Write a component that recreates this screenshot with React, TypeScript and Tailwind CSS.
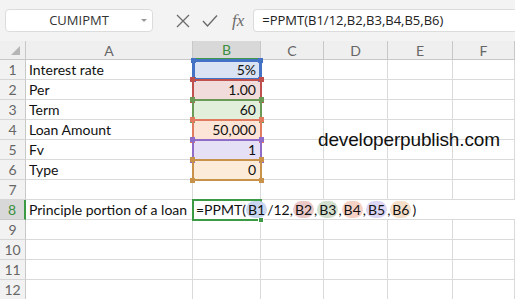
import React from "react";

const rows = [
  { n: 1, a: "Interest rate", b: "5%", fill: "bg-[#dae3f3]", border: "border-[#4472c4] border-[3px]", sq: "bg-[#4472c4]" },
  { n: 2, a: "Per", b: "1.00", fill: "bg-[#f2dcdb]", border: "border-[#c0504d] border-2", sq: "bg-[#c0504d]" },
  { n: 3, a: "Term", b: "60", fill: "bg-[#e2efda]", border: "border-[#6a9a55] border-2", sq: "bg-[#6a9a55]" },
  { n: 4, a: "Loan Amount", b: "50,000", fill: "bg-[#fce4d6]", border: "border-[#e07b5f] border-2", sq: "bg-[#e07b5f]" },
  { n: 5, a: "Fv", b: "1", fill: "bg-[#e6e0f7]", border: "border-[#8f6cc8] border-2", sq: "bg-[#8f6cc8]" },
  { n: 6, a: "Type", b: "0", fill: "bg-[#fcebd9]", border: "border-[#c9924a] border-2", sq: "bg-[#c9924a]" },
];

const cols = ["C", "D", "E", "F"];

function Cell({ className = "", children }: { className?: string; children?: React.ReactNode }) {
  return <div className={"h-[20px] border-r border-b border-[#dadada] " + className}>{children}</div>;
}

function RowHead({ n, active }: { n: number; active?: boolean }) {
  return (
    <div
      className={
        "h-[20px] flex items-center justify-center border-b text-[14px] font-['Lato'] " +
        (active
          ? "bg-[#d8d8d8] text-[#3b8f3e] border-r-2 border-r-[#3b9a43] border-b-[#c8c8c8]"
          : "bg-[#f2f2f2] text-[#666] border-r border-r-[#c8c8c8] border-b-[#d6d6d6]")
      }
    >
      {n}
    </div>
  );
}

function Corners({ sq }: { sq: string }) {
  return (
    <>
      <div className={"absolute -left-[4px] -top-[4px] w-[5px] h-[5px] " + sq} />
      <div className={"absolute -right-[4px] -top-[4px] w-[5px] h-[5px] " + sq} />
      <div className={"absolute -left-[4px] -bottom-[4px] w-[5px] h-[5px] " + sq} />
      <div className={"absolute -right-[4px] -bottom-[4px] w-[5px] h-[5px] " + sq} />
    </>
  );
}

function Chip({ bg, children }: { bg: string; children: React.ReactNode }) {
  return <span className={"relative z-20 inline-block rounded-full px-[2px] leading-[17px] " + bg}>{children}</span>;
}

export default function App() {
  return (
    <div className="w-[515px] h-[299px] overflow-hidden bg-white relative">
      {/* toolbar */}
      <div className="h-[41px] bg-[#f3f3f3] flex items-center pl-[5px] font-['Open_Sans']">
        <div className="w-[148px] h-[23px] bg-white rounded-[4px] border border-[#dcdcdc] relative flex items-center justify-center text-[13px] text-[#333]">
          CUMIPMT
          <svg className="absolute right-[5px] top-[9px]" width="6" height="4" viewBox="0 0 6 4">
            <path d="M0 0 L6 0 L3 3 Z" fill="#999" />
          </svg>
        </div>
        <div className="flex items-center ml-[23px] gap-[10px]">
          <svg width="14" height="14" viewBox="0 0 14 14">
            <path d="M1 1 L13 13 M13 1 L1 13" stroke="#6b6b6b" strokeWidth="1.3" fill="none" />
          </svg>
          <svg width="16" height="14" viewBox="0 0 16 14" className="ml-[2px]">
            <path d="M1 7 L5.5 12 L15 1.5" stroke="#6b6b6b" strokeWidth="1.4" fill="none" />
          </svg>
          <span className="ml-[4px] text-[17px] italic text-[#6b6b6b] font-['Liberation_Serif'] leading-none">fx</span>
        </div>
        <div className="ml-[9px] flex-1 h-[23px] bg-white rounded-l-[4px] border border-r-0 border-[#dcdcdc] flex items-center pl-[8px] text-[13px] text-[#222]">
          =PPMT(B1/12,B2,B3,B4,B5,B6)
        </div>
      </div>

      {/* grid */}
      <div className="grid grid-cols-[26px_167px_68px_63px_64px_65px_62px] font-['Lato'] text-[14px] text-[#111]">
        {/* header row */}
        <div className="h-[19px] bg-[#efefef] border-r border-b border-[#c8c8c8] relative">
          <svg className="absolute right-[5px] bottom-[4px]" width="9" height="9" viewBox="0 0 9 9">
            <path d="M9 0 L9 9 L0 9 Z" fill="#b5b5b5" />
          </svg>
        </div>
        <div className="h-[19px] bg-[#efefef] border-r border-b border-[#c8c8c8] flex items-center justify-center text-[14px] text-[#666]">A</div>
        <div className="h-[19px] bg-[#d8d8d8] border-r border-r-[#c8c8c8] border-b-2 border-b-[#3b9a43] flex items-center justify-center text-[14px] text-[#3b8f3e]">B</div>
        {cols.map((c) => (
          <div key={c} className="h-[19px] bg-[#efefef] border-r border-b border-[#c8c8c8] flex items-center justify-center text-[14px] text-[#666]">
            {c}
          </div>
        ))}

        {rows.map((r) => (
          <React.Fragment key={r.n}>
            <RowHead n={r.n} />
            <Cell className="flex items-center pl-[3px] whitespace-nowrap">{r.a}</Cell>
            <div className={"h-[20px] relative flex items-center justify-end pr-[5px] border-b border-[#dadada] " + r.fill}>
              {r.b}
              <div className={"absolute -left-[1px] -top-[1px] w-[70px] h-[22px] z-10 " + r.border}>
                <Corners sq={r.sq} />
              </div>
            </div>
            {cols.map((c) => (
              <Cell key={c} />
            ))}
          </React.Fragment>
        ))}

        {/* row 7 */}
        <RowHead n={7} />
        <Cell />
        <Cell />
        {cols.map((c) => (
          <Cell key={c} />
        ))}

        {/* row 8 */}
        <RowHead n={8} active />
        <Cell className="flex items-center pl-[3px] whitespace-nowrap">Principle portion of a loan</Cell>
        <div className="col-span-5 h-[20px] border-b border-[#dadada] relative flex items-center pl-[3px] whitespace-nowrap">
          <span>=PPMT(</span>
          <Chip bg="bg-[#c9d6f0]">B1</Chip>
          <span>/12,</span>
          <Chip bg="bg-[#ebc9c8]">B2</Chip>
          <span>,</span>
          <Chip bg="bg-[#d3dfce]">B3</Chip>
          <span>,</span>
          <Chip bg="bg-[#f6d2c6]">B4</Chip>
          <span>,</span>
          <Chip bg="bg-[#dcd6f4]">B5</Chip>
          <span>,</span>
          <Chip bg="bg-[#f5dfc8]">B6</Chip>
          <span className="ml-[1px]">)</span>
          <div className="absolute -left-[1px] -top-[1px] w-[70px] h-[22px] border-2 border-[#3b9a43] z-10">
            <div className="absolute -right-[4px] -bottom-[4px] w-[6px] h-[6px] bg-[#3b9a43] border border-white" />
          </div>
        </div>

        {[9, 10, 11, 12].map((n) => (
          <React.Fragment key={n}>
            <RowHead n={n} />
            <Cell />
            <Cell />
            {cols.map((c) => (
              <Cell key={c} />
            ))}
          </React.Fragment>
        ))}
      </div>

      {/* watermark */}
      <div className="absolute left-[318px] top-[126px] text-[19px] text-[#111] font-['Liberation_Sans'] tracking-[-0.15px]">
        developerpublish.com
      </div>
    </div>
  );
}
